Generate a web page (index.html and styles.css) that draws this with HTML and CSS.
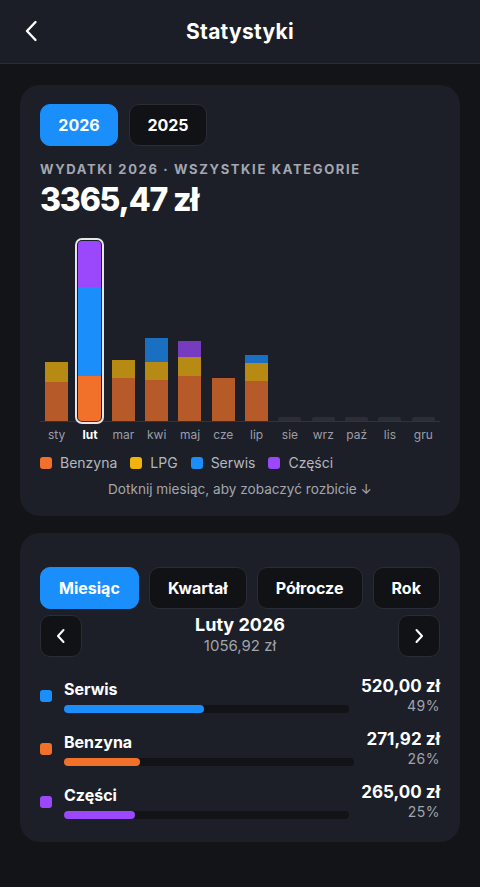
FILE: index.html
```html
<!doctype html>
<html lang="pl">
	<head>
		<title>Statystyki</title>
		<meta charset="utf-8">
		<meta name="viewport" content="width=device-width, initial-scale=1">
		<link rel="stylesheet" href="styles.css">
	</head>
	<body>
<header class="topbar">
	<button class="back" aria-label="Wstecz">
		<svg width="14" height="22" viewBox="0 0 14 22"><path d="M11.5 2 L3 11 L11.5 20" fill="none" stroke="#fff" stroke-width="2.4" stroke-linecap="round" stroke-linejoin="round"/></svg>
	</button>
	<h1>Statystyki</h1>
</header>

<main class="content">

	<section class="card chart-card">
		<div class="years">
			<button class="pill active">2026</button>
			<button class="pill">2025</button>
		</div>
		<p class="eyebrow">WYDATKI 2026 · WSZYSTKIE KATEGORIE</p>
		<p class="total">3365,47 zł</p>

		<div class="chart">
			<div class="col"><div class="stack"><i class="seg lpg" style="height:20px"></i><i class="seg fuel" style="height:39px"></i></div></div>
			<div class="col"><div class="stack selected"><i class="seg parts" style="height:46px"></i><i class="seg service" style="height:89px"></i><i class="seg fuel" style="height:45px"></i></div></div>
			<div class="col"><div class="stack"><i class="seg lpg" style="height:18px"></i><i class="seg fuel" style="height:43px"></i></div></div>
			<div class="col"><div class="stack"><i class="seg service" style="height:24px"></i><i class="seg lpg" style="height:18px"></i><i class="seg fuel" style="height:41px"></i></div></div>
			<div class="col"><div class="stack"><i class="seg parts" style="height:16px"></i><i class="seg lpg" style="height:19px"></i><i class="seg fuel" style="height:45px"></i></div></div>
			<div class="col"><div class="stack"><i class="seg fuel" style="height:43px"></i></div></div>
			<div class="col"><div class="stack"><i class="seg service" style="height:8px"></i><i class="seg lpg" style="height:18px"></i><i class="seg fuel" style="height:40px"></i></div></div>
			<div class="col"><div class="stack empty"></div></div>
			<div class="col"><div class="stack empty"></div></div>
			<div class="col"><div class="stack empty"></div></div>
			<div class="col"><div class="stack empty"></div></div>
			<div class="col"><div class="stack empty"></div></div>
		</div>
		<div class="months">
			<span>sty</span><span class="on">lut</span><span>mar</span><span>kwi</span><span>maj</span><span>cze</span>
			<span>lip</span><span>sie</span><span>wrz</span><span>paź</span><span>lis</span><span>gru</span>
		</div>

		<ul class="legend">
			<li><i class="dot fuel"></i>Benzyna</li>
			<li><i class="dot lpg"></i>LPG</li>
			<li><i class="dot service"></i>Serwis</li>
			<li><i class="dot parts"></i>Części</li>
		</ul>
		<p class="hint">Dotknij miesiąc, aby zobaczyć rozbicie ↓</p>
	</section>

	<section class="card breakdown">
		<div class="tabs">
			<button class="tab active">Miesiąc</button>
			<button class="tab">Kwartał</button>
			<button class="tab">Półrocze</button>
			<button class="tab">Rok</button>
		</div>

		<div class="period">
			<button class="nav" aria-label="Poprzedni">
				<svg width="10" height="16" viewBox="0 0 10 16"><path d="M7.5 2 L2 8 L7.5 14" fill="none" stroke="#fff" stroke-width="2" stroke-linecap="round" stroke-linejoin="round"/></svg>
			</button>
			<div class="period-title">
				<b>Luty 2026</b>
				<span>1056,92 zł</span>
			</div>
			<button class="nav" aria-label="Następny">
				<svg width="10" height="16" viewBox="0 0 10 16"><path d="M2.5 2 L8 8 L2.5 14" fill="none" stroke="#fff" stroke-width="2" stroke-linecap="round" stroke-linejoin="round"/></svg>
			</button>
		</div>

		<ul class="rows">
			<li class="row">
				<i class="dot service"></i>
				<div class="row-main">
					<b>Serwis</b>
					<div class="track"><div class="fill service" style="width:49%"></div></div>
				</div>
				<div class="row-sum"><b>520,00 zł</b><span>49%</span></div>
			</li>
			<li class="row">
				<i class="dot fuel"></i>
				<div class="row-main">
					<b>Benzyna</b>
					<div class="track"><div class="fill fuel" style="width:26%"></div></div>
				</div>
				<div class="row-sum"><b>271,92 zł</b><span>26%</span></div>
			</li>
			<li class="row">
				<i class="dot parts"></i>
				<div class="row-main">
					<b>Części</b>
					<div class="track"><div class="fill parts" style="width:25%"></div></div>
				</div>
				<div class="row-sum"><b>265,00 zł</b><span>25%</span></div>
			</li>
		</ul>
	</section>

</main>
	</body>
</html>
```

FILE: styles.css
```css
* {
	box-sizing: border-box;
	margin: 0;
	padding: 0;
}
html, body {
	height: 100%;
}
body {
	background: #131418;
	color: #fff;
	font-family: Inter, "Noto Sans", sans-serif;
	font-size: 14px;
	overflow: hidden;
}
button {
	font-family: inherit;
	color: #fff;
	border: 0;
	background: none;
	cursor: pointer;
}
ul { list-style: none; }
b { font-weight: 700; }

/* header */
.topbar {
	position: relative;
	height: 64px;
	background: #1b1e26;
	border-bottom: 1px solid #2a2d35;
	display: flex;
	align-items: center;
	justify-content: center;
}
.topbar h1 {
	font-size: 21px;
	font-weight: 700;
	letter-spacing: 0.3px;
}
.back {
	position: absolute;
	left: 24px;
	top: 20px;
	display: flex;
}

.content {
	padding: 21px 20px;
}
.card {
	background: #1c1f27;
	border-radius: 20px;
	padding: 19px 20px 18px;
}

/* year switch */
.years {
	display: flex;
	gap: 11px;
}
.pill {
	width: 78px;
	height: 42px;
	border-radius: 10px;
	font-size: 16px;
	font-weight: 700;
	background: #111216;
	border: 1px solid #2a2d35;
}
.pill.active, .tab.active {
	background: #1a8ffb;
	border-color: #1a8ffb;
}

.eyebrow {
	margin-top: 14px;
	font-size: 13px;
	line-height: 18px;
	font-weight: 700;
	letter-spacing: 1.65px;
	color: #a3a7b1;
}
.total {
	margin-top: 2px;
	font-size: 32px;
	line-height: 40px;
	font-weight: 800;
	letter-spacing: -1.2px;
}

/* chart */
.chart {
	margin-top: 2px;
	height: 200px;
	display: flex;
	align-items: flex-end;
	border-bottom: 1px solid #30333b;
}
.col {
	flex: 1;
	display: flex;
	justify-content: center;
}
.stack {
	width: 23px;
	display: flex;
	flex-direction: column;
	opacity: 0.72;
}
.stack.selected {
	opacity: 1;
	border-radius: 4px;
	overflow: hidden;
	outline: 2px solid #e6e6e8;
	outline-offset: 1px;
}
.stack.empty {
	height: 4px;
	background: #2b2e36;
	opacity: 1;
	border-radius: 2px 2px 0 0;
}
.seg { display: block; }

.fuel { background: #f2712a; }
.lpg { background: #f2b40c; }
.service { background: #1a8ffb; }
.parts { background: #9b47fb; }

.months {
	display: flex;
	margin-top: 5px;
}
.months span {
	flex: 1;
	text-align: center;
	font-size: 12px;
	line-height: 16px;
	color: #9a9ea8;
}
.months .on {
	color: #fff;
	font-weight: 700;
}

.legend {
	display: flex;
	gap: 13px;
	margin-top: 10px;
	font-size: 14px;
	line-height: 20px;
	color: #b3b7bf;
}
.legend li {
	display: flex;
	align-items: center;
	gap: 8px;
}
.dot {
	display: block;
	width: 12px;
	height: 12px;
	border-radius: 3px;
	flex: none;
}
.hint {
	margin-top: 7px;
	text-align: center;
	font-size: 13.6px;
	line-height: 18px;
	color: #a2a6ae;
}

/* breakdown */
.breakdown {
	margin-top: 17px;
	padding: 34px 20px 21px;
}
.tabs {
	display: flex;
	gap: 10px;
}
.tab {
	flex: 1 1 auto;
	height: 42px;
	padding: 0 14px;
	border-radius: 10px;
	font-size: 16px;
	font-weight: 700;
	background: #111216;
	border: 1px solid #2a2d35;
}
.period {
	margin-top: 6px;
	display: flex;
	align-items: center;
	justify-content: space-between;
}
.nav {
	width: 42px;
	height: 42px;
	border-radius: 10px;
	background: #111216;
	border: 1px solid #2a2d35;
	display: flex;
	align-items: center;
	justify-content: center;
}
.period-title {
	display: flex;
	flex-direction: column;
	align-items: center;
	margin-top: -4px;
}
.period-title b {
	font-size: 18px;
	line-height: 22px;
}
.period-title span {
	font-size: 15px;
	line-height: 19px;
	color: #a0a4ad;
}

.rows {
	margin-top: 19px;
	display: flex;
	flex-direction: column;
	gap: 14px;
}
.row {
	display: flex;
	align-items: center;
	gap: 12px;
}
.row-main {
	flex: 1;
	display: flex;
	flex-direction: column;
	gap: 6px;
	padding-top: 1px;
}
.row-main b {
	font-size: 16px;
	line-height: 20px;
}
.track {
	height: 8px;
	border-radius: 4px;
	background: #121317;
}
.fill {
	height: 100%;
	border-radius: 4px;
}
.row-sum {
	display: flex;
	flex-direction: column;
	align-items: flex-end;
}
.row-sum b {
	font-size: 17px;
	line-height: 20px;
}
.row-sum span {
	font-size: 14px;
	line-height: 19px;
	color: #a0a4ad;
	letter-spacing: 0.5px;
}
```
